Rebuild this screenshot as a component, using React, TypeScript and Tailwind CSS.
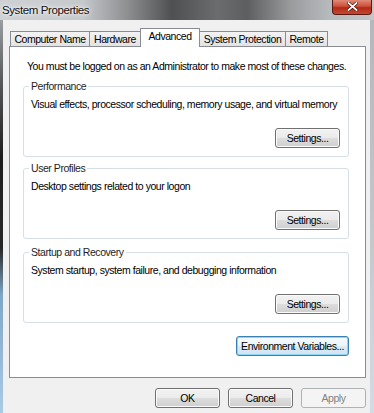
const ui = "font-['Liberation_Sans',Arial,sans-serif]";
const txt = "text-[10.5px] leading-[13px] tracking-[-0.45px] whitespace-nowrap";

function Tab({ label, w, selected }: { label: string; w: string; selected?: boolean }) {
  if (selected) {
    return (
      <div
        className={`relative z-10 -mb-px -ml-px flex h-[19px] ${w} shrink-0 justify-center border border-b-0 border-[#898c95] bg-white pt-[1px] ${txt} text-black`}
      >
        {label}
      </div>
    );
  }
  return (
    <div
      className={`-ml-px flex h-[15px] ${w} shrink-0 items-center justify-center border border-b-0 border-[#898c95] bg-gradient-to-b from-[#f3f3f3] to-[#e3e3e3] ${txt} text-black first:ml-0`}
    >
      {label}
    </div>
  );
}

type BtnKind = "normal" | "default" | "disabled";

function Button({ label, w, kind = "normal" }: { label: string; w: string; kind?: BtnKind }) {
  const skin =
    kind === "default"
      ? "border-[#3c7fb1] bg-[linear-gradient(#f6fbfe_0%,#eaf4fa_50%,#dcebf5_50%,#d0e4f1_100%)] shadow-[inset_0_0_0_1px_#8fd3f5] text-black"
      : kind === "disabled"
        ? "border-[#adb2b5] bg-[#f4f4f4] text-[#838383]"
        : "border-[#707070] bg-[linear-gradient(#f2f2f2_0%,#ebebeb_50%,#dddddd_50%,#cfcfcf_100%)] shadow-[inset_0_0_0_1px_#fbfbfb] text-black";
  return (
    <div
      className={`flex h-[20px] ${w} shrink-0 items-center justify-center rounded-[3px] border ${txt} ${skin}`}
    >
      {label}
    </div>
  );
}

function Group({ title, desc, mt }: { title: string; desc: string; mt: string }) {
  return (
    <fieldset className={`${mt} min-w-0 rounded-[3px] border border-[#d5dfe5] pr-[8px] pb-[8px] pl-[7px]`}>
      <legend className={`-ml-[2px] px-[2px] ${txt} text-[#1e1e1e]`}>{title}</legend>
      <div className={`pt-[5px] ${txt} text-black`}>{desc}</div>
      <div className="mt-[17px] flex justify-end">
        <Button label="Settings..." w="w-[65px]" />
      </div>
    </fieldset>
  );
}

export default function App() {
  return (
    <div className={`flex h-[413px] w-[374px] flex-col overflow-hidden ${ui}`}>
      {/* glass caption */}
      <div className="flex h-[20px] shrink-0 items-start justify-between bg-[linear-gradient(90deg,#cfd2d5_0%,#c6c9cc_22%,#8d8f91_34%,#4f5052_46%,#6b6c6e_58%,#5d5e60_66%,#9a9c9e_78%,#b7babd_88%,#c4c7ca_100%)] pr-[2px] pl-[2px]">
        <span className="pt-[3px] text-[11.5px] leading-[14px] tracking-[-0.4px] whitespace-nowrap text-[#111] [text-shadow:0_0_6px_#fff,0_0_3px_#fff]">
          System Properties
        </span>
        <div className="flex h-[15px] w-[40px] shrink-0 items-center justify-center rounded-b-[4px] border border-t-0 border-[#5a1a14] bg-[linear-gradient(#e08a78_0%,#cc4f3a_45%,#b32a17_55%,#c4492f_100%)]">
          <svg width="11" height="9" viewBox="0 0 11 9" className="-mt-[2px]">
            <path d="M1.5 1 L9.5 8 M9.5 1 L1.5 8" stroke="#3a0a05" strokeWidth="3" strokeLinecap="square" />
            <path d="M1.5 1 L9.5 8 M9.5 1 L1.5 8" stroke="#ffffff" strokeWidth="1.8" strokeLinecap="square" />
          </svg>
        </div>
      </div>

      <div className="flex min-h-0 flex-1">
        <div className="w-[3px] shrink-0 bg-[linear-gradient(#9a9ea3_0%,#5a5b5d_15%,#1d1d1d_35%,#262626_58%,#7ea7c7_70%,#a9cbe6_100%)]" />

        {/* client area */}
        <div className="flex min-w-0 flex-1 flex-col bg-[#f0f0f0] pr-[4px] pl-[6px]">
          <div className="flex h-[26px] items-end pl-[1px]">
            <Tab label="Computer Name" w="w-[80px]" />
            <Tab label="Hardware" w="w-[52px]" />
            <Tab label="Advanced" w="w-[60px]" selected />
            <Tab label="System Protection" w="w-[87px]" />
            <Tab label="Remote" w="w-[43px]" />
          </div>

          <div className="flex h-[332px] min-w-0 flex-col border border-[#898c95] bg-white pt-[13px] pr-[16px] pl-[13px]">
            <div className={`ml-[4px] ${txt} text-black`}>
              You must be logged on as an Administrator to make most of these changes.
            </div>
            <Group
              mt="mt-[7px]"
              title="Performance"
              desc="Visual effects, processor scheduling, memory usage, and virtual memory"
            />
            <Group mt="mt-[5px]" title="User Profiles" desc="Desktop settings related to your logon" />
            <Group
              mt="mt-[7px]"
              title="Startup and Recovery"
              desc="System startup, system failure, and debugging information"
            />
            <div className="mt-[13px] flex justify-end">
              <Button label="Environment Variables..." w="w-[113px]" kind="default" />
            </div>
          </div>

          <div className="mt-[10px] flex justify-end gap-[8px]">
            <Button label="OK" w="w-[65px]" />
            <Button label="Cancel" w="w-[65px]" />
            <Button label="Apply" w="w-[65px]" kind="disabled" />
          </div>
        </div>

        <div className="w-[4px] shrink-0 bg-[linear-gradient(#b4b8bc_0%,#c2c6ca_50%,#d2dce6_100%)]" />
      </div>
    </div>
  );
}
